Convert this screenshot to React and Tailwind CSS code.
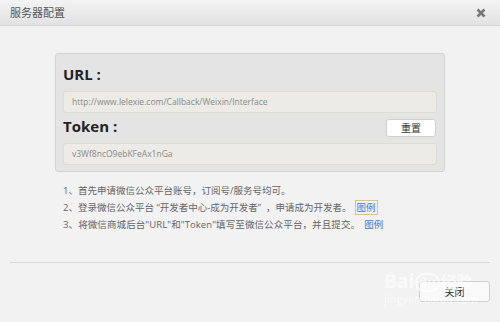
export default function App() {
    const font = { fontFamily: '"Open Sans", "Noto Sans CJK SC", sans-serif' };

    return (
        <div
            className="relative w-[500px] h-[322px] overflow-hidden bg-[#f2f2f2] flex flex-col text-[#555]"
            style={font}
        >
            {/* header */}
            <div className="h-[26px] flex items-center justify-between pl-[10px] pr-[14px] bg-gradient-to-b from-[#f3f3f3] to-[#e2e2e2] border-b border-[#d4d4d4]">
                <span className="text-[11px] text-[#555] font-['Noto_Sans_CJK_SC',sans-serif]">服务器配置</span>
                <svg width="10" height="10" viewBox="0 0 10 10" className="mt-[1px]">
                    <path d="M1.5 1.5 L8.5 8.5 M8.5 1.5 L1.5 8.5" stroke="#777" strokeWidth="2.6" strokeLinecap="butt" />
                </svg>
            </div>

            {/* config panel */}
            <div className="ml-[55px] mt-[27px] w-[390px] bg-[#e4e4e4] border border-[#d2d2d2] rounded-[3px] pt-[8px] pb-[6px] px-[7px]">
                <div className="h-[29px] flex items-start">
                    <span className="text-[15px] leading-[24px] font-bold text-[#222]">URL :</span>
                </div>
                <div className="h-[22px] bg-[#ecebe5] border border-[#dcdcd6] rounded-[3px] flex items-center px-[8px] text-[8.5px] text-[#8a8a8a]">
                    http://www.lelexie.com/Callback/Weixin/Interface
                </div>
                <div className="h-[30px] flex items-center justify-between">
                    <span className="text-[15px] leading-[20px] font-bold text-[#222] -mt-[4px]">Token :</span>
                    <button className="w-[50px] h-[18px] mr-[1px] bg-white border border-[#d0d0d0] rounded-[3px] text-[10px] leading-none text-[#333]">
                        重置
                    </button>
                </div>
                <div className="h-[22px] bg-[#ecebe5] border border-[#dcdcd6] rounded-[3px] flex items-center px-[8px] text-[8.5px] text-[#8a8a8a]">
                    v3Wf8ncO9ebKFeAx1nGa
                </div>
            </div>

            {/* help text */}
            <div className="ml-[63px] mt-[10px] text-[9.5px] leading-[17px] text-[#666]">
                <p>1、首先申请微信公众平台账号，订阅号/服务号均可。</p>
                <p>
                    2、登录微信公众平台 “开发者中心-成为开发者”&nbsp;&nbsp;，申请成为开发者。
                    <span className="ml-[3px] text-[#3a7bd5] border border-[#f0c060] px-[1px]">图例</span>
                </p>
                <p className="tracking-[0.1px]">
                    3、将微信商城后台"URL"和"Token"填写至微信公众平台，并且提交。
                    <span className="ml-[2px] text-[#3a7bd5] px-[2px]">图例</span>
                </p>
            </div>

            {/* footer */}
            <div className="mx-[10px] mt-[29px] border-t border-[#dadada]"></div>
            <div className="flex justify-end pr-[10px] mt-[18px]">
                <button className="w-[71px] h-[21px] bg-[#f9f9f9] border border-[#cfcfcf] rounded-[3px] text-[10px] leading-none text-[#333]">
                    关闭
                </button>
            </div>

            {/* watermark */}
            <div className="absolute left-[384px] top-[270px] flex flex-col items-start pointer-events-none text-white/70">
                <div className="flex items-end gap-[1px] font-bold text-[19px] leading-[22px]">
                    <span>Bai</span>
                    <span className="text-[13px] rounded-full border-2 border-white/70 px-[2px] leading-[15px]">du</span>
                    <span className="text-[16px] font-['Noto_Sans_CJK_SC',sans-serif]">经验</span>
                </div>
                <span className="text-[10px] leading-[14px] tracking-[0.5px]">jingyan.baidu.com</span>
            </div>
        </div>
    );
}
